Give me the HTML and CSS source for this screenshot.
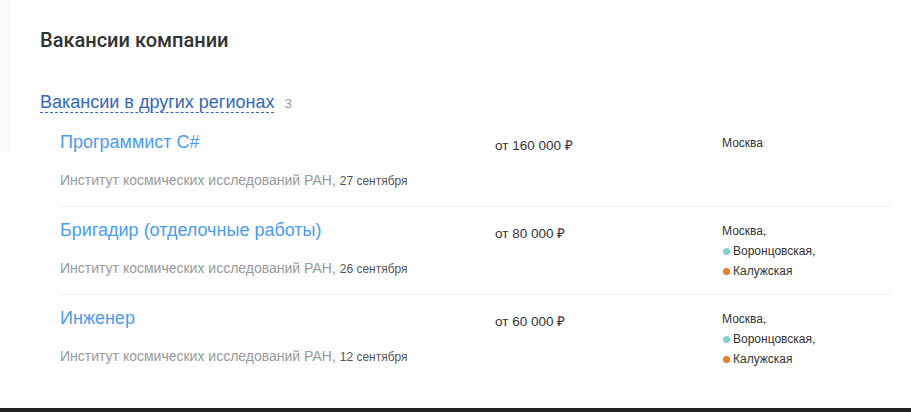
FILE: index.html
```html
<!DOCTYPE html>
<html lang="ru">
<head>
<meta charset="utf-8">
<title>Вакансии компании</title>
<link rel="stylesheet" href="styles.css">
</head>
<body>
<main class="page">
  <h2 class="title">Вакансии компании</h2>
  <div class="regions">
    <a class="regions-link" href="#">Вакансии в других регионах</a><span class="regions-count">3</span>
  </div>
  <ul class="list">
    <li class="row">
      <div class="info">
        <a class="job" href="#">Программист C#</a>
        <div class="company">Институт космических исследований РАН, <span class="date">27 сентября</span></div>
      </div>
      <div class="salary">от 160 000 ₽</div>
      <div class="place">
        <div class="city">Москва</div>
      </div>
    </li>
    <li class="row">
      <div class="info">
        <a class="job" href="#">Бригадир (отделочные работы)</a>
        <div class="company">Институт космических исследований РАН, <span class="date">26 сентября</span></div>
      </div>
      <div class="salary">от 80 000 ₽</div>
      <div class="place">
        <div class="city">Москва,</div>
        <div class="metro"><span class="dot dot-teal"></span>Воронцовская,</div>
        <div class="metro"><span class="dot dot-orange"></span>Калужская</div>
      </div>
    </li>
    <li class="row">
      <div class="info">
        <a class="job" href="#">Инженер</a>
        <div class="company">Институт космических исследований РАН, <span class="date">12 сентября</span></div>
      </div>
      <div class="salary">от 60 000 ₽</div>
      <div class="place">
        <div class="city">Москва,</div>
        <div class="metro"><span class="dot dot-teal"></span>Воронцовская,</div>
        <div class="metro"><span class="dot dot-orange"></span>Калужская</div>
      </div>
    </li>
  </ul>
</main>
<footer class="footer"></footer>
</body>
</html>
```

FILE: styles.css
```css
html, body {
  margin: 0;
  padding: 0;
}
body {
  font-family: "Liberation Sans", Arial, sans-serif;
  color: #333;
  background: linear-gradient(#fafafa, #fafafa) 0 0 / 10px 152px no-repeat, #fff;
  width: 911px;
  height: 412px;
  display: flex;
  flex-direction: column;
  overflow: hidden;
}
.page {
  flex: 1;
  padding: 26px 21px 0 40px;
}
.title {
  margin: 0;
  font-family: Roboto, "Liberation Sans", sans-serif;
  font-weight: 500;
  font-size: 20px;
  line-height: 28px;
  color: #333;
}
.regions {
  margin-top: 39px;
  height: 26px;
  display: flex;
  align-items: baseline;
}
.regions-link {
  font-size: 18px;
  line-height: 19px;
  color: #3268b8;
  text-decoration: none;
  border-bottom: 1px dashed #3268b8;
}
.regions-count {
  margin-left: 10px;
  font-size: 13.5px;
  color: #999;
}
.list {
  list-style: none;
  margin: 0;
  padding: 0 0 0 20px;
}
.row {
  display: grid;
  grid-template-columns: 435px 227px 1fr;
  height: 88px;
  box-sizing: border-box;
  padding-top: 12px;
  border-bottom: 1px solid #ececec;
}
.row:last-child {
  border-bottom: none;
}
.info {
  display: flex;
  flex-direction: column;
  align-items: flex-start;
}
.job {
  font-size: 18px;
  line-height: 22px;
  color: #4c9cf0;
  text-decoration: none;
}
.company {
  margin-top: 19px;
  font-size: 14px;
  line-height: 16px;
  color: #999;
}
.date {
  font-size: 12px;
  color: #555;
}
.salary {
  padding-top: 4px;
  font-size: 13.5px;
  line-height: 22px;
  color: #333;
}
.place {
  padding-top: 2px;
  font-size: 12px;
  line-height: 20px;
  color: #333;
}
.metro {
  display: flex;
  align-items: center;
}
.dot {
  width: 7px;
  height: 7px;
  border-radius: 50%;
  margin: 1px 3px 0 1px;
}
.dot-teal {
  background: #84ced4;
}
.dot-orange {
  background: #f07d26;
}
.footer {
  height: 4px;
  background: #222;
}
```
